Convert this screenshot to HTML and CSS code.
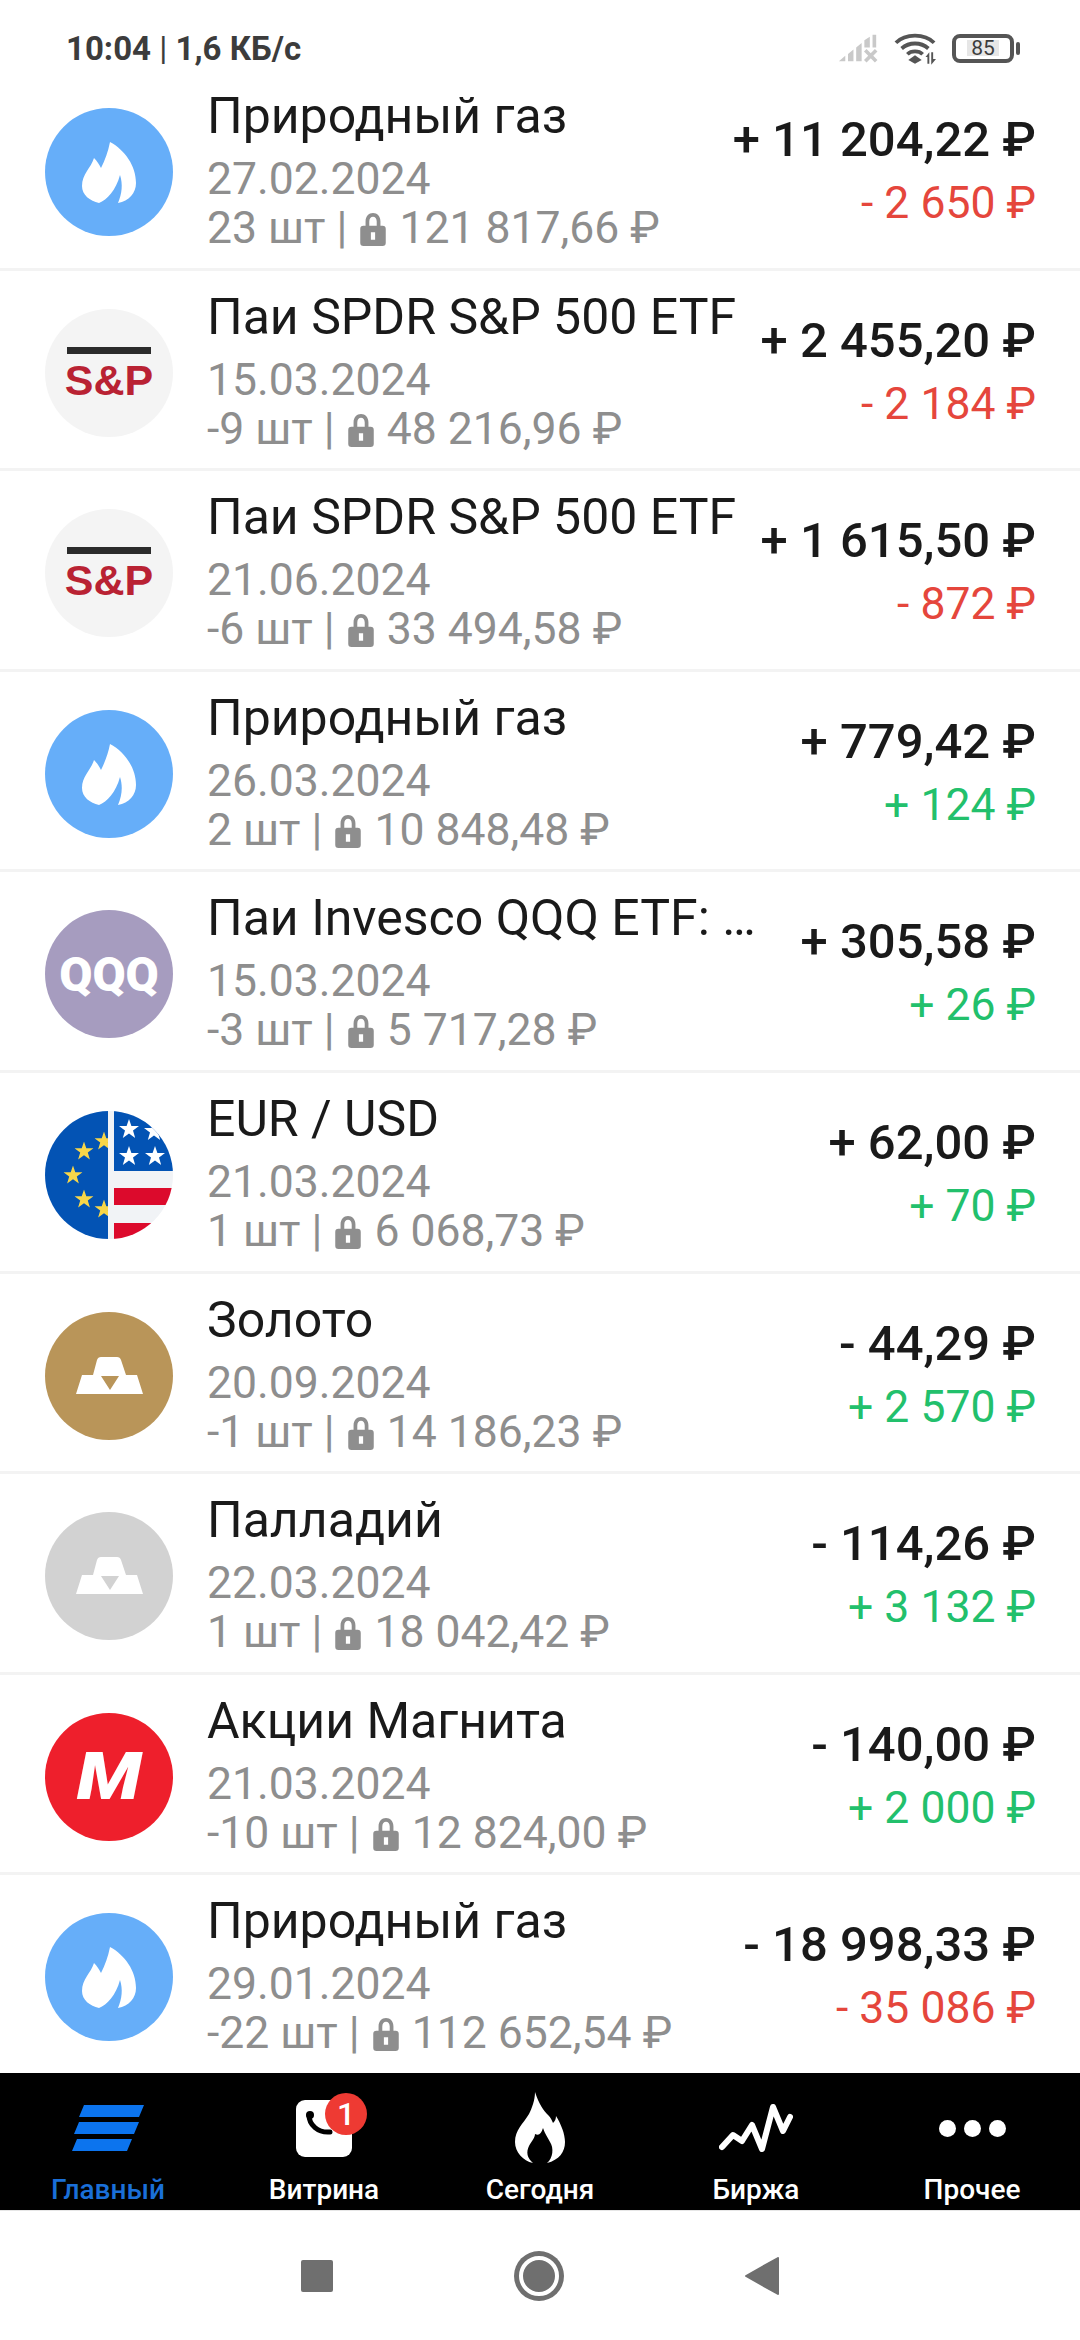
FILE: index.html
```html
<!DOCTYPE html>
<html>
<head>
  <title>Сделки</title>
  <link rel="stylesheet" href="styles.css">
</head>
<body>
  <svg class="defs" width="0" height="0">
    <symbol id="flame" viewBox="0 0 128 128">
      <path fill="#fff" d="M65 34C63 44 60 52 56 60C54 56 52 53 49 50C46 60 37 66 37 78C37 87 45 93 54 95C62 92 71 82 75 67C78 76 77 86 73 95C84 93 91 85 91 75C91 58 80 42 65 34Z"/>
    </symbol>
    <symbol id="bars" viewBox="0 0 128 128">
      <path fill="#fff" fill-rule="evenodd" d="M56 45H72Q75 45 76 48L81 63H92L98 82H31L37 63H48L52 48Q53 45 56 45ZM56 64L65 78L74 64Z"/>
    </symbol>
    <symbol id="lock" viewBox="0 0 24 32">
      <path fill="#8e8e8e" fill-rule="evenodd" d="M5 13V9C5 4 8 1 12 1S19 4 19 9V13H21C23 13 24 14 24 16V29C24 31 23 32 21 32H3C1 32 0 31 0 29V16C0 14 1 13 3 13ZM8.500 13H15.500V9C15.500 6 14 4.500 12 4.500S8.500 6 8.500 9ZM10 19V26H14V19Z"/>
    </symbol>
    <symbol id="star" viewBox="0 0 20 20">
      <path d="M10 0L12.400 7H20L14 11.500L16.200 19L10 14.500L3.800 19L6 11.500L0 7H7.600Z"/>
    </symbol>
    <clipPath id="flag-clip"><circle cx="64" cy="64" r="64"/></clipPath>
  </svg>

  <div class="status">
    <div class="status-text"><b>10:04</b> | <b>1,6 КБ/с</b></div>
    <div class="status-icons">
      <svg width="40" height="29" viewBox="0 0 44 30">
        <path fill="#c9c9c9" d="M1 29L8 23V29ZM11 21L17 16V29H11ZM20 14L26 9V29H20ZM29 6L35 2V14H29ZM38 0H42V14H38Z"/>
        <path stroke="#c9c9c9" stroke-width="4" d="M30 17L42 29M42 17L30 29"/>
      </svg>
      <svg width="42" height="33" viewBox="0 0 44 34">
        <path fill="none" stroke="#555" stroke-width="4" d="M2 11C12 1 32 1 42 11M8 17C16 10 28 10 36 17M14 23C18 19 26 19 30 23"/>
        <path fill="#555" d="M22 24L29 29L22 33L15 29Z"/>
        <path fill="#555" d="M33 26L37 21V33H35V26ZM39 21H41V28L44 28L39 34Z"/>
      </svg>
      <div class="battery"><span>85</span></div>
    </div>
  </div>

  <div class="list">
    <div class="row">
      <div class="logo gas"><svg width="128" height="128"><use href="#flame"/></svg></div>
      <div class="info">
        <div class="title">Природный газ</div>
        <div class="date">27.02.2024</div>
        <div class="meta">23 шт | <svg class="lock" width="26" height="34"><use href="#lock"/></svg> 121 817,66 ₽</div>
      </div>
      <div class="sums">
        <div class="amount">+ 11 204,22 ₽</div>
        <div class="delta minus">- 2 650 ₽</div>
      </div>
    </div>
    <div class="row">
      <div class="logo spx"><div class="spx-bar"></div><div class="spx-text">S&amp;P</div></div>
      <div class="info">
        <div class="title">Паи SPDR S&amp;P 500 ETF</div>
        <div class="date">15.03.2024</div>
        <div class="meta">-9 шт | <svg class="lock" width="26" height="34"><use href="#lock"/></svg> 48 216,96 ₽</div>
      </div>
      <div class="sums">
        <div class="amount">+ 2 455,20 ₽</div>
        <div class="delta minus">- 2 184 ₽</div>
      </div>
    </div>
    <div class="row">
      <div class="logo spx"><div class="spx-bar"></div><div class="spx-text">S&amp;P</div></div>
      <div class="info">
        <div class="title">Паи SPDR S&amp;P 500 ETF</div>
        <div class="date">21.06.2024</div>
        <div class="meta">-6 шт | <svg class="lock" width="26" height="34"><use href="#lock"/></svg> 33 494,58 ₽</div>
      </div>
      <div class="sums">
        <div class="amount">+ 1 615,50 ₽</div>
        <div class="delta minus">- 872 ₽</div>
      </div>
    </div>
    <div class="row">
      <div class="logo gas"><svg width="128" height="128"><use href="#flame"/></svg></div>
      <div class="info">
        <div class="title">Природный газ</div>
        <div class="date">26.03.2024</div>
        <div class="meta">2 шт | <svg class="lock" width="26" height="34"><use href="#lock"/></svg> 10 848,48 ₽</div>
      </div>
      <div class="sums">
        <div class="amount">+ 779,42 ₽</div>
        <div class="delta plus">+ 124 ₽</div>
      </div>
    </div>
    <div class="row">
      <div class="logo qqq">QQQ</div>
      <div class="info">
        <div class="title">Паи Invesco QQQ ETF: …</div>
        <div class="date">15.03.2024</div>
        <div class="meta">-3 шт | <svg class="lock" width="26" height="34"><use href="#lock"/></svg> 5 717,28 ₽</div>
      </div>
      <div class="sums">
        <div class="amount">+ 305,58 ₽</div>
        <div class="delta plus">+ 26 ₽</div>
      </div>
    </div>
    <div class="row">
      <div class="logo">
        <svg width="128" height="128" viewBox="0 0 128 128">
          <g clip-path="url(#flag-clip)">
            <rect width="64" height="128" fill="#0353b4"/>
            <rect x="64" width="64" height="128" fill="#f1f3f6"/>
            <rect x="69" width="59" height="60" fill="#0353b4"/>
            <rect x="69" y="77" width="59" height="17" fill="#dc0a2c"/>
            <rect x="69" y="112" width="59" height="16" fill="#dc0a2c"/>
            <g fill="#fff">
              <use href="#star" x="74" y="8" width="20" height="20"/>
              <use href="#star" x="99" y="10" width="20" height="20"/>
              <use href="#star" x="74" y="35" width="20" height="20"/>
              <use href="#star" x="100" y="35" width="20" height="20"/>
            </g>
            <g fill="#f8d648">
              <use href="#star" x="49.500" y="20.500" width="19" height="19"/>
              <use href="#star" x="29.500" y="30.500" width="19" height="19"/>
              <use href="#star" x="18.500" y="54.500" width="19" height="19"/>
              <use href="#star" x="29.500" y="78.500" width="19" height="19"/>
              <use href="#star" x="49.500" y="88.500" width="19" height="19"/>
            </g>
            <rect x="63" width="6" height="128" fill="#f1f3f6"/>
          </g>
        </svg>
      </div>
      <div class="info">
        <div class="title">EUR / USD</div>
        <div class="date">21.03.2024</div>
        <div class="meta">1 шт | <svg class="lock" width="26" height="34"><use href="#lock"/></svg> 6 068,73 ₽</div>
      </div>
      <div class="sums">
        <div class="amount">+ 62,00 ₽</div>
        <div class="delta plus">+ 70 ₽</div>
      </div>
    </div>
    <div class="row">
      <div class="logo gold"><svg width="128" height="128"><use href="#bars"/></svg></div>
      <div class="info">
        <div class="title">Золото</div>
        <div class="date">20.09.2024</div>
        <div class="meta">-1 шт | <svg class="lock" width="26" height="34"><use href="#lock"/></svg> 14 186,23 ₽</div>
      </div>
      <div class="sums">
        <div class="amount">- 44,29 ₽</div>
        <div class="delta plus">+ 2 570 ₽</div>
      </div>
    </div>
    <div class="row">
      <div class="logo palladium"><svg width="128" height="128"><use href="#bars"/></svg></div>
      <div class="info">
        <div class="title">Палладий</div>
        <div class="date">22.03.2024</div>
        <div class="meta">1 шт | <svg class="lock" width="26" height="34"><use href="#lock"/></svg> 18 042,42 ₽</div>
      </div>
      <div class="sums">
        <div class="amount">- 114,26 ₽</div>
        <div class="delta plus">+ 3 132 ₽</div>
      </div>
    </div>
    <div class="row">
      <div class="logo magnit"><span>M</span></div>
      <div class="info">
        <div class="title">Акции Магнита</div>
        <div class="date">21.03.2024</div>
        <div class="meta">-10 шт | <svg class="lock" width="26" height="34"><use href="#lock"/></svg> 12 824,00 ₽</div>
      </div>
      <div class="sums">
        <div class="amount">- 140,00 ₽</div>
        <div class="delta plus">+ 2 000 ₽</div>
      </div>
    </div>
    <div class="row">
      <div class="logo gas"><svg width="128" height="128"><use href="#flame"/></svg></div>
      <div class="info">
        <div class="title">Природный газ</div>
        <div class="date">29.01.2024</div>
        <div class="meta">-22 шт | <svg class="lock" width="26" height="34"><use href="#lock"/></svg> 112 652,54 ₽</div>
      </div>
      <div class="sums">
        <div class="amount">- 18 998,33 ₽</div>
        <div class="delta minus">- 35 086 ₽</div>
      </div>
    </div>
  </div>

  <div class="tabs">
    <div class="tab active">
      <div class="tab-icon">
        <svg width="72" height="46" viewBox="0 0 72 46" fill="#0c74ee">
          <path d="M12 0H72L67 12H7ZM7 17H67L62 29H2ZM5 34H60L55 46H0Z"/>
        </svg>
      </div>
      <div class="tab-label">Главный</div>
    </div>
    <div class="tab">
      <div class="tab-icon">
        <svg width="56" height="58" viewBox="0 0 56 58">
          <rect y="1" width="56" height="57" rx="9" fill="#fff"/>
          <path fill="none" stroke="#000" stroke-width="5" stroke-linecap="round" d="M13 16C13 26 22 34 34 33"/>
          <circle cx="14" cy="16" r="4"/>
        </svg>
        <div class="badge">1</div>
      </div>
      <div class="tab-label">Витрина</div>
    </div>
    <div class="tab">
      <div class="tab-icon">
        <svg width="50" height="72" viewBox="0 0 50 72">
          <path fill="#fff" d="M20 0C24 12 28 18 34 24C36 26 37 29 38 31C40 29 41 27 41 24C46 32 50 42 50 50C50 60 44 68 32 71C38 66 39 56 35 50C33 46 30 42 28 36C26 42 24 44 20 42C20 46 16 50 14 54C11 60 12 66 18 71C8 69 0 60 0 50C0 38 8 32 14 22C17 16 20 8 20 0Z"/>
        </svg>
      </div>
      <div class="tab-label">Сегодня</div>
    </div>
    <div class="tab">
      <div class="tab-icon">
        <svg width="74" height="50" viewBox="0 0 74 50">
          <path fill="none" stroke="#fff" stroke-width="6" stroke-linecap="round" stroke-linejoin="round" d="M3 44L14 32L23 38L33 22L43 46L54 4L64 28L71 14"/>
        </svg>
      </div>
      <div class="tab-label">Биржа</div>
    </div>
    <div class="tab">
      <div class="tab-icon">
        <div class="dots"><span></span><span></span><span></span></div>
      </div>
      <div class="tab-label">Прочее</div>
    </div>
  </div>

  <div class="sysnav">
    <div class="sys-square"></div>
    <div class="sys-circle"></div>
    <svg width="34" height="38" viewBox="0 0 34 38">
      <path fill="#6f6f6f" stroke="#6f6f6f" stroke-width="2" stroke-linejoin="round" d="M1 19L33 1V37Z"/>
    </svg>
  </div>
</body>
</html>
```

FILE: styles.css
```css
html, body {
  margin: 0;
}

body {
  display: flex;
  flex-direction: column;
  width: 1080px;
  height: 2340px;
  background-color: #fff;
  font-family: Roboto, "Noto Sans", sans-serif;
  color: #1a1a1a;
  overflow: hidden;
}

.defs {
  position: absolute;
}

/* status bar */
.status {
  height: 70px;
  display: flex;
  justify-content: space-between;
  align-items: center;
  padding: 26px 60px 0 66px;
  box-sizing: border-box;
  flex-shrink: 0;
}

.status-text {
  font-size: 33px;
  color: #3c3c3c;
}

.status-text b {
  font-weight: 700;
}

.status-icons {
  display: flex;
  align-items: center;
  gap: 16px;
  margin-right: 6px;
}

.battery {
  width: 54px;
  height: 21px;
  border: 4px solid #555;
  border-radius: 8px;
  display: flex;
  align-items: center;
  justify-content: center;
  position: relative;
}

.battery span {
  background-color: #e6e6e6;
  font-size: 21px;
  line-height: 16px;
  color: #3c3c3c;
  padding: 0 4px;
}

.battery::after {
  content: "";
  position: absolute;
  right: -10px;
  top: 4px;
  width: 4px;
  height: 13px;
  background-color: #555;
  border-radius: 2px;
}

/* list */
.list {
  flex: 1;
  display: flex;
  flex-direction: column;
  min-height: 0;
}

.row {
  flex: 1;
  display: flex;
  align-items: flex-start;
  padding: 0 44px 0 45px;
  border-bottom: 3px solid #f3f3f3;
  box-sizing: border-box;
}

.row:last-child {
  border-bottom: 0;
}

.logo {
  width: 128px;
  height: 128px;
  border-radius: 50%;
  flex-shrink: 0;
  margin-top: 38px;
  margin-right: 34px;
  display: flex;
  flex-direction: column;
  align-items: center;
  justify-content: center;
}

.gas { background-color: #66aef9; }
.gold { background-color: #b99559; }
.palladium { background-color: #d2d2d2; }
.spx { background-color: #f4f4f4; }

.spx-bar {
  width: 84px;
  height: 7px;
  background-color: #2b2b2b;
  margin: 4px 0 3px;
}

.spx-text {
  font-family: "Liberation Sans", sans-serif;
  font-weight: 700;
  font-size: 43px;
  line-height: 46px;
  color: #b92233;
}

.qqq {
  background-color: #a69cbf;
  color: #fff;
  font-weight: 900;
  font-size: 48px;
}

.magnit {
  background-color: #ee1f2c;
  color: #fff;
  font-weight: 900;
  font-style: italic;
  font-size: 66px;
}

.magnit span {
  display: inline-block;
  transform: scaleX(1.15);
}

.info {
  flex: 1;
  min-width: 0;
  padding-top: 14px;
  white-space: nowrap;
}

.title {
  font-size: 50px;
  line-height: 64px;
}

.date {
  font-size: 44.500px;
  line-height: 62px;
  color: #8e8e8e;
}

.meta {
  font-size: 44.500px;
  line-height: 36px;
  color: #8e8e8e;
}

.lock {
  vertical-align: -3px;
  margin: 0 2px;
}

.sums {
  text-align: right;
  white-space: nowrap;
  padding-top: 40px;
}

.amount {
  font-size: 49px;
  font-weight: 500;
  line-height: 60px;
}

.delta {
  font-size: 44.500px;
  line-height: 66px;
}

.minus { color: #e5463c; }
.plus { color: #22c06c; }

/* bottom tabs */
.tabs {
  height: 137px;
  background-color: #000;
  display: flex;
  flex-shrink: 0;
}

.tab {
  width: 216px;
  display: flex;
  flex-direction: column;
  align-items: center;
  color: #fff;
}

.tab-icon {
  height: 100px;
  display: flex;
  align-items: center;
  justify-content: center;
  position: relative;
  padding-top: 10px;
  box-sizing: border-box;
}

.tab-label {
  font-size: 28px;
  font-weight: 500;
  line-height: 34px;
}

.active .tab-label {
  color: #1a6fd8;
}

.badge {
  position: absolute;
  top: 20px;
  right: -15px;
  width: 42px;
  height: 42px;
  border-radius: 50%;
  background-color: #ee3a33;
  font-size: 32px;
  font-weight: 500;
  line-height: 42px;
  text-align: center;
}

.dots {
  display: flex;
  gap: 8px;
}

.dots span {
  width: 17px;
  height: 17px;
  border-radius: 50%;
  background-color: #fff;
}

/* android nav */
.sysnav {
  height: 130px;
  flex-shrink: 0;
  display: flex;
  align-items: center;
  justify-content: center;
  gap: 186px;
  border-top: 1px solid #e6e6e6;
  box-sizing: border-box;
}

.sys-square {
  width: 32px;
  height: 32px;
  background-color: #6f6f6f;
  border-radius: 2px;
}

.sys-circle {
  width: 32px;
  height: 32px;
  border-radius: 50%;
  background-color: #6f6f6f;
  border: 4px solid #fff;
  box-shadow: 0 0 0 5px #6f6f6f;
}
```
